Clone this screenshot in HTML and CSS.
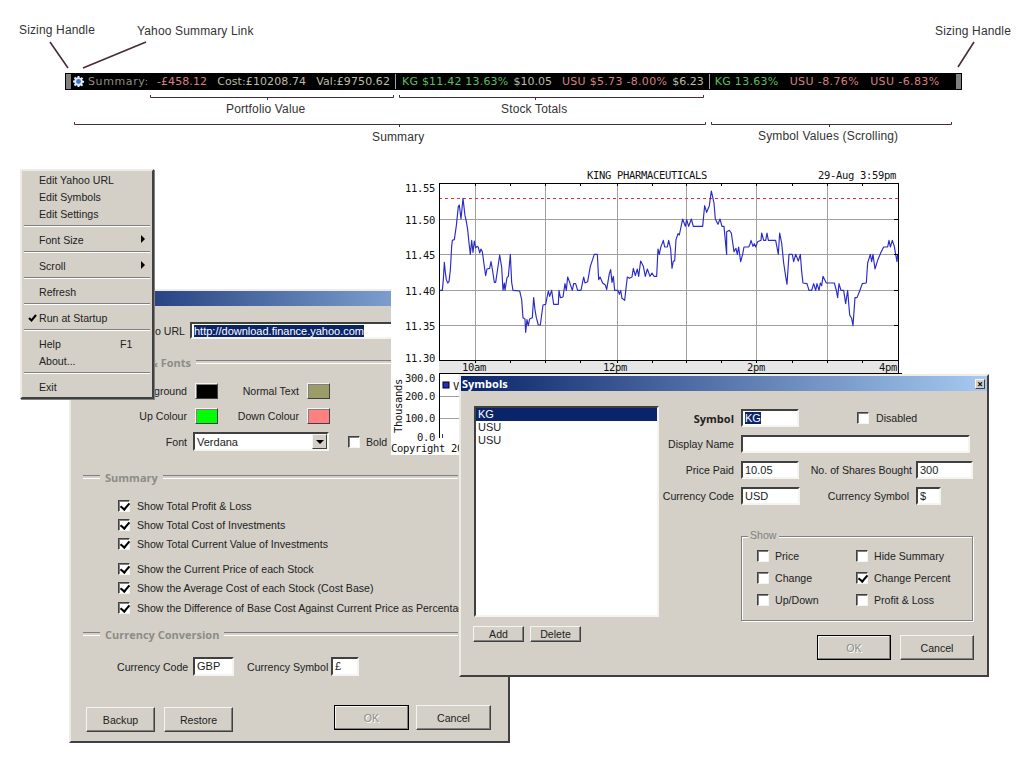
FILE: index.html
```html
<!DOCTYPE html>
<html lang="en">
<head>
    <meta charset="UTF-8">
    <title>Stock Ticker</title>
    <link rel="stylesheet" href="styles.css">
</head>
<body>
<div class="canvas">

    <!-- annotations -->
    <span class="note note-handle-l">Sizing Handle</span>
    <span class="note note-link">Yahoo Summary Link</span>
    <span class="note note-handle-r">Sizing Handle</span>
    <span class="note note-portfolio">Portfolio Value</span>
    <span class="note note-totals">Stock Totals</span>
    <span class="note note-summary">Summary</span>
    <span class="note note-symbols">Symbol Values (Scrolling)</span>

    <svg class="marks" width="1024" height="150" viewBox="0 0 1024 150">
        <g stroke="#4a2a3a" fill="none">
            <path stroke-width="1.6" d="M50 42L68 68M146 42L83 68M974 42L958 67"/>
            <path d="M150.500 95V97.500H393.500V95M267.500 97V100"/>
            <path d="M399.500 95V97.500H703.500V95M535.500 97V100"/>
            <path d="M74.500 122V124.500H705.500V122M399.500 124V127"/>
            <path d="M711.500 122V124.500H951.500V122M829.500 124V127"/>
        </g>
    </svg>

    <!-- ticker bar -->
    <div class="ticker">
        <span class="handle"></span>
        <svg class="gear" width="11" height="11" viewBox="0 0 11 11">
            <path fill="#dfeaf8" d="M4.500 0h2v1.500l1.300.5 1-1 1.400 1.400-1 1 .5 1.300H11v2H9.700l-.5 1.300 1 1-1.400 1.400-1-1-1.300.5V11h-2V9.700l-1.300-.5-1 1-1.400-1.400 1-1L1.300 6.500H0v-2h1.300l.5-1.300-1-1L2.200.8l1 1 1.300-.5z"/>
            <circle cx="5.500" cy="5.500" r="2.400" fill="#3c78c8"/>
        </svg>
        <span class="tick-text muted t-summary">Summary:</span>
        <span class="tick-text down t-loss">-£458.12</span>
        <span class="tick-text plain t-cost">Cost:£10208.74</span>
        <span class="tick-text plain t-val">Val:£9750.62</span>
        <span class="divider"></span>
        <span class="tick-text up t-kg">KG $11.42 13.63%</span>
        <span class="tick-text plain t-paid">$10.05</span>
        <span class="tick-text down t-usu">USU $5.73 -8.00%</span>
        <span class="tick-text plain t-paid2">$6.23</span>
        <span class="divider"></span>
        <span class="tick-text up t-kg2">KG 13.63%</span>
        <span class="tick-text down t-usu2">USU -8.76%</span>
        <span class="tick-text down t-usu3">USU -6.83%</span>
        <span class="handle handle-r"></span>
    </div>

    <!-- settings window -->
    <div class="window settings">
        <div class="titlebar"></div>
        <div class="row url-row">
            <span class="label url-label">Yahoo URL</span>
            <span class="input url-input"><span class="sel">http://download.finance.yahoo.com</span></span>
        </div>

        <div class="group-head head-fonts"><span>Colours &amp; Fonts</span></div>
        <div class="row swatch-row first-swatch">
            <span class="label lab-a">Background</span>
            <span class="swatch black"></span>
            <span class="label lab-b">Normal Text</span>
            <span class="swatch olive"></span>
        </div>
        <div class="row swatch-row">
            <span class="label lab-a">Up Colour</span>
            <span class="swatch green"></span>
            <span class="label lab-b">Down Colour</span>
            <span class="swatch pink"></span>
        </div>
        <div class="row font-row">
            <span class="label lab-a">Font</span>
            <span class="input select">Verdana<span class="drop"></span></span>
            <span class="check bold-check"></span>
            <span class="bold-label">Bold</span>
        </div>

        <div class="group-head head-summary"><span>Summary</span></div>
        <ul class="checks">
            <li><span class="check on"></span>Show Total Profit &amp; Loss</li>
            <li><span class="check on"></span>Show Total Cost of Investments</li>
            <li><span class="check on"></span>Show Total Current Value of Investments</li>
            <li class="gap"><span class="check on"></span>Show the Current Price of each Stock</li>
            <li><span class="check on"></span>Show the Average Cost of each Stock (Cost Base)</li>
            <li><span class="check on"></span>Show the Difference of Base Cost Against Current Price as Percentage</li>
        </ul>

        <div class="group-head head-currency"><span>Currency Conversion</span></div>
        <div class="row currency-row">
            <span class="cur-code">Currency Code</span>
            <span class="input code-input">GBP</span>
            <span class="cur-sym">Currency Symbol</span>
            <span class="input sym-input">£</span>
        </div>

        <div class="actions">
            <div class="actions-left">
                <button class="btn">Backup</button>
                <button class="btn">Restore</button>
            </div>
            <div class="actions-right">
                <button class="btn default">OK</button>
                <button class="btn">Cancel</button>
            </div>
        </div>
    </div>

    <!-- chart picture -->
    <svg class="chart" width="511" height="290" viewBox="0 0 511 290">
        <rect width="511" height="290" fill="#fff"/>
        <rect x="48" y="195" width="459" height="13" fill="#e6e6e6"/>
        <g stroke="#a0a0a0" fill="none">
            <path d="M48 54.500H507M48 89.500H507M48 125.500H507M48 160.500H507"/>
            <path d="M84.500 18V195M154.500 18V195M226.500 18V195M295.500 18V195M365.500 18V195M436.500 18V195"/>
            <path d="M48 231.500H120M48 253.500H120"/>
        </g>
        <path d="M48 33.500H507" stroke="#e0303c" stroke-dasharray="3 3"/>
        <g fill="none" stroke="#2a2ac8" stroke-width="1.150" stroke-linejoin="round">
            <polyline vector-effect="non-scaling-stroke" transform="translate(44 18) scale(.3333)" points="14,322 22,322 25,290 28,238 31,268 34,290 38,300 42,296 46,262 50,190 52,172 58,170 64,128 70,70 73,66 78,108 84,46 90,98 94,115 98,140 102,180 106,214 110,172 114,208 118,174 122,195 126,190 130,193 134,210 138,198 142,206 148,250 152,278 156,258 164,256 168,236 172,258 178,298 182,298 188,258 194,216 200,252 204,322 208,300 210,322 216,284 220,280 226,214 230,298 234,322 254,324 260,350 264,404 270,408 272,448 276,410 280,428 284,408 292,404 296,344 300,380 304,404 310,426 316,426 324,366 332,364 340,324 344,340 350,322 356,364 370,364 372,322 376,344 384,342 390,302 394,322 398,282 404,298 412,322 416,302 422,302 428,322 438,322 446,282 450,300 458,296 466,250 472,232 478,214"/>
            <polyline vector-effect="non-scaling-stroke" transform="translate(199 18) scale(.3333)" points="12,214 22,214 26,290 30,282 38,300 46,306 50,320 58,272 62,260 66,298 70,280 74,322 84,322 88,334 92,322 96,346 104,352 108,316 112,282 118,286 126,282 130,256 136,278 142,258 146,280 152,234 160,250 166,280 172,258 180,280 186,270 192,280 200,280 204,198 208,214 212,194 220,172 224,192 232,192 236,172 242,198 246,256 250,234 254,234 258,170 264,152 268,156 278,108 286,130 290,110 296,130 304,108 310,130 338,130 344,68 350,88 358,68 364,24 372,60 376,108 384,124 390,108 396,130 402,130 410,214 410,146 418,142 424,150 432,206 438,196 442,214 446,192 452,236 458,214 462,192 476,192 480,184"/>
            <polyline vector-effect="non-scaling-stroke" transform="translate(354 18) scale(.3333)" points="15,184 18,172 24,190 28,182 32,192 38,176 48,172 50,150 56,172 62,172 66,150 70,172 92,172 100,214 104,150 110,180 116,240 122,280 126,304 132,214 142,214 146,236 152,214 160,234 166,214 170,266 174,300 186,302 192,322 200,322 206,302 212,322 216,302 222,322 226,300 230,308 234,280 244,300 268,300 274,322 278,344 282,302 288,322 296,322 302,362 308,322 314,396 320,406 324,428 330,344 336,344 344,324 352,302 364,300 368,240 376,214 380,236 384,214 390,258 398,232 408,208 416,192 428,192 432,172 436,192 442,172 448,190 452,214 456,236 458,214"/>
        </g>
        <g stroke="#000" fill="none">
            <rect x="48.500" y="18.500" width="459" height="177"/>
            <path d="M48.500 208.500H520M48.500 208V273M507.500 195V208"/>
            <path d="M84.500 18V21M119.500 18V21M154.500 18V21M189.500 18V21M226.500 18V21M261.500 18V21M295.500 18V21M330.500 18V21M365.500 18V21M401.500 18V21M436.500 18V21M471.500 18V21"/>
            <path d="M84.500 195V198M119.500 195V198M154.500 195V198M189.500 195V198M226.500 195V198M261.500 195V198M295.500 195V198M330.500 195V198M365.500 195V198M401.500 195V198M436.500 195V198M471.500 195V198"/>
            <path d="M503 54.500H507M503 89.500H507M503 125.500H507M503 160.500H507"/>
        </g>
        <rect x="52" y="217" width="6" height="6" fill="#2a2ac8" stroke="#000"/>
        <path d="M51.500 269V273" stroke="#2a2ac8"/>
        <g class="chart-text">
            <text x="196" y="14">KING PHARMACEUTICALS</text>
            <text x="427" y="14">29-Aug 3:59pm</text>
            <text x="14" y="27">11.55</text>
            <text x="14" y="59">11.50</text>
            <text x="14" y="94">11.45</text>
            <text x="14" y="130">11.40</text>
            <text x="14" y="165">11.35</text>
            <text x="14" y="197">11.30</text>
            <text x="71" y="206">10am</text>
            <text x="212" y="206">12pm</text>
            <text x="356" y="206">2pm</text>
            <text x="488" y="206">4pm</text>
            <text x="14" y="217">300.0</text>
            <text x="14" y="235">200.0</text>
            <text x="14" y="257">100.0</text>
            <text x="26" y="276">0.0</text>
            <text x="62" y="225">V</text>
            <text x="0" y="287">Copyright 2003</text>
            <text transform="translate(11 268) rotate(-90)">Thousands</text>
        </g>
    </svg>

    <!-- symbols window -->
    <div class="window symbols">
        <div class="titlebar title-symbols">
            <span>Symbols</span>
            <span class="close">×</span>
        </div>
        <div class="sym-body">
            <div class="sym-left">
                <ul class="listbox">
                    <li class="active">KG</li>
                    <li>USU</li>
                    <li>USU</li>
                </ul>
                <div class="list-btns">
                    <button class="btn small">Add</button>
                    <button class="btn small">Delete</button>
                </div>
            </div>
            <div class="sym-right">
                <div class="form-row">
                    <span class="form-label strong">Symbol</span>
                    <span class="input w-58"><span class="sel">KG</span></span>
                    <span class="check disabled-check"></span>
                    <span>Disabled</span>
                </div>
                <div class="form-row">
                    <span class="form-label">Display Name</span>
                    <span class="input w-name"></span>
                </div>
                <div class="form-row">
                    <span class="form-label">Price Paid</span>
                    <span class="input w-58">10.05</span>
                    <span class="form-label2">No. of Shares Bought</span>
                    <span class="input w-shares">300</span>
                </div>
                <div class="form-row">
                    <span class="form-label">Currency Code</span>
                    <span class="input w-59">USD</span>
                    <span class="form-label3">Currency Symbol</span>
                    <span class="input w-cur">$</span>
                </div>
                <div class="show-group">
                    <span class="show-legend">Show</span>
                    <div class="show-grid">
                        <div class="show-item"><span class="check"></span>Price</div>
                        <div class="show-item"><span class="check"></span>Hide Summary</div>
                        <div class="show-item"><span class="check"></span>Change</div>
                        <div class="show-item"><span class="check on"></span>Change Percent</div>
                        <div class="show-item"><span class="check"></span>Up/Down</div>
                        <div class="show-item"><span class="check"></span>Profit &amp; Loss</div>
                    </div>
                </div>
                <div class="sym-actions">
                    <button class="btn default">OK</button>
                    <button class="btn">Cancel</button>
                </div>
            </div>
        </div>
    </div>

    <!-- popup menu -->
    <div class="menu">
        <div class="item">Edit Yahoo URL</div>
        <div class="item">Edit Symbols</div>
        <div class="item">Edit Settings</div>
        <div class="sep"></div>
        <div class="item">Font Size<span class="arrow"></span></div>
        <div class="sep"></div>
        <div class="item">Scroll<span class="arrow"></span></div>
        <div class="sep"></div>
        <div class="item">Refresh</div>
        <div class="sep"></div>
        <div class="item">
            <svg class="tick" width="9" height="8" viewBox="0 0 9 8"><path d="M1 4l2.500 2.500L8 1" fill="none" stroke="#000" stroke-width="2"/></svg>
            Run at Startup
        </div>
        <div class="sep"></div>
        <div class="item"><span class="item-name">Help</span><span>F1</span></div>
        <div class="item">About...</div>
        <div class="sep"></div>
        <div class="item">Exit</div>
    </div>

</div>
</body>
</html>
```

FILE: styles.css
```css
* {
    box-sizing: border-box;
}

body {
    margin: 0;
    background-color: #fff;
    font-family: "Liberation Sans", sans-serif;
    font-size: 10.600px;
    color: #222;
}

.canvas {
    position: relative;
    width: 1024px;
    height: 768px;
    overflow: hidden;
}

/* annotations */
.note {
    position: absolute;
    font-family: "Liberation Sans", sans-serif;
    font-size: 12px;
    letter-spacing: 0.15px;
    line-height: 14px;
    color: #333;
    white-space: nowrap;
}

.note-handle-l { left: 19px; top: 23px; }
.note-link { left: 137px; top: 24px; }
.note-handle-r { left: 935px; top: 24px; }
.note-portfolio { left: 226px; top: 102px; }
.note-totals { left: 501px; top: 102px; }
.note-summary { left: 372px; top: 130px; }
.note-symbols { left: 758px; top: 129px; }

.marks {
    position: absolute;
    left: 0;
    top: 0;
}

/* ticker */
.ticker {
    position: absolute;
    left: 65px;
    top: 73px;
    width: 897px;
    height: 17px;
    display: flex;
    align-items: center;
    background-color: #000;
    font-family: "DejaVu Sans", sans-serif;
    font-size: 11px;
    letter-spacing: 0.1px;
    white-space: nowrap;
}

.handle {
    flex: none;
    width: 5px;
    height: 15px;
    margin-left: 1px;
    background-color: #808080;
}

.handle-r {
    margin-left: auto;
    margin-right: 1px;
}

.gear {
    flex: none;
    margin-left: 2px;
}

.divider {
    flex: none;
    width: 1px;
    height: 15px;
    background-color: #a0a0a0;
}

.tick-text { line-height: 17px; }
.muted { color: #8f8f80; }
.plain { color: #bdbdaa; }
.up { color: #58c058; }
.down { color: #d88080; }

.t-summary { margin-left: 4px; letter-spacing: 0.6px; }
.t-loss { margin-left: 8px; }
.t-cost { margin-left: 10px; }
.t-val { margin-left: 10px; }
.t-val + .divider { margin-left: 5px; }
.t-kg { margin-left: 6px; letter-spacing: 0.2px; }
.t-paid { margin-left: 5px; letter-spacing: 0; }
.t-usu { margin-left: 10px; letter-spacing: 0.3px; }
.t-paid2 { margin-left: 5px; letter-spacing: 0; }
.t-paid2 + .divider { margin-left: 5px; }
.t-kg2 { margin-left: 5px; letter-spacing: 0.3px; }
.t-usu2 { margin-left: 11px; letter-spacing: 0.4px; }
.t-usu3 { margin-left: 11px; letter-spacing: 0.4px; }

/* windows */
.window {
    position: absolute;
    background-color: #d4d0c8;
    border: 2px solid;
    border-color: #eeece6 #404040 #404040 #eeece6;
    overflow: hidden;
}

.titlebar {
    height: 15px;
    background: linear-gradient(to right, #0a246a, #a6caf0);
}

.settings {
    left: 69px;
    top: 289px;
    width: 441px;
    height: 454px;
}

.row {
    display: flex;
    align-items: center;
    white-space: nowrap;
}

.label {
    text-align: right;
}

.input {
    display: block;
    height: 18px;
    padding: 1px 2px;
    background-color: #fff;
    border: 2px solid;
    border-color: #404040 #f4f4f0 #f4f4f0 #404040;
    line-height: 12px;
    font-size: 11px;
    white-space: nowrap;
    overflow: hidden;
}

.sel {
    background-color: #0a246a;
    color: #fff;
}

.url-row {
    height: 17px;
    margin-top: 16px;
}

.url-label {
    width: 114px;
    margin-right: 5px;
}

.url-input {
    width: 300px;
    height: 17px;
}

.group-head {
    display: flex;
    align-items: center;
    height: 14px;
    margin-left: 12px;
    margin-right: 50px;
    font-family: "Open Sans", sans-serif;
    font-size: 11px;
    font-weight: 700;
    color: #8c8c86;
}

.group-head::before,
.group-head::after {
    content: "";
    height: 2px;
    border-top: 1px solid #808080;
    border-bottom: 1px solid #fff;
}

.group-head::before {
    width: 17px;
    margin-right: 5px;
}

.group-head::after {
    flex: 1;
    margin-left: 5px;
}

.head-fonts { margin-top: 16px; }

.swatch-row {
    height: 17px;
    margin-top: 8px;
}

.first-swatch { margin-top: 13px; }

.lab-a {
    width: 116px;
    margin-right: 8px;
}

.lab-b {
    width: 81px;
    margin-right: 8px;
}

.swatch {
    width: 23px;
    height: 16px;
    border: 1px solid;
    border-color: #f4f4f0 #404040 #404040 #f4f4f0;
    box-shadow: inset 1px 1px 0 #808080;
}

.black { background-color: #000; }
.olive { background-color: #9c9c68; }
.green { background-color: #00ff00; }
.pink { background-color: #ff8080; }

.font-row {
    height: 19px;
    margin-top: 8px;
}

.font-row .lab-a { margin-right: 6px; }

.select {
    position: relative;
    width: 136px;
    height: 19px;
    line-height: 14px;
}

.drop {
    position: absolute;
    right: 0;
    top: 0;
    width: 15px;
    height: 15px;
    background-color: #d4d0c8;
    border: 1px solid;
    border-color: #f4f4f0 #404040 #404040 #f4f4f0;
}

.drop::after {
    content: "";
    position: absolute;
    left: 3px;
    top: 5px;
    border-left: 4px solid transparent;
    border-right: 4px solid transparent;
    border-top: 4px solid #000;
}

.check {
    position: relative;
    flex: none;
    display: inline-block;
    width: 12px;
    height: 12px;
    background-color: #fff;
    border: 1px solid;
    border-color: #404040 #f4f4f0 #f4f4f0 #404040;
    box-shadow: inset 1px 1px 0 #808080;
}

.check.on::after {
    content: "";
    position: absolute;
    left: 3px;
    top: 0;
    width: 4px;
    height: 7px;
    border: solid #000;
    border-width: 0 2px 2px 0;
    transform: rotate(40deg);
}

.bold-check { margin-left: 19px; }
.bold-label { margin-left: 6px; }

.head-summary { margin-top: 19px; }

.checks {
    list-style: none;
    margin: 12px 0 0;
    padding: 0 0 0 47px;
    white-space: nowrap;
}

.checks li {
    display: flex;
    align-items: center;
    height: 19px;
}

.checks li.gap { margin-top: 6px; }
.checks li:last-child { margin-top: 1px; }

.checks .check { margin-right: 7px; }

.head-currency { margin-top: 10px; }

.currency-row {
    height: 19px;
    margin-top: 16px;
    padding-left: 46px;
}

.cur-code { width: 76px; }

.code-input {
    width: 41px;
    height: 19px;
}

.cur-sym {
    width: 80px;
    margin-left: 13px;
}

.sym-input {
    width: 28px;
    height: 19px;
    margin-left: 4px;
}

.actions {
    display: flex;
    justify-content: space-between;
    align-items: flex-start;
    margin-top: 29px;
    padding: 0 17px 0 15px;
}

.actions-left {
    display: flex;
    gap: 9px;
    padding-top: 2px;
}

.actions-right {
    display: flex;
    gap: 7px;
}

.btn {
    width: 69px;
    height: 25px;
    padding: 0;
    font: inherit;
    color: #222;
    background-color: #d4d0c8;
    border: 1px solid;
    border-color: #f4f4f0 #404040 #404040 #f4f4f0;
    box-shadow: inset -1px -1px 0 #808080;
}

.actions-right .btn {
    width: 75px;
}

.btn.default {
    border: 1px solid #000;
    box-shadow: inset -1px -1px 0 #808080, inset 1px 1px 0 #f4f4f0;
    color: #8c8c86;
    text-shadow: 1px 1px 0 #fff;
}

/* chart */
.chart {
    position: absolute;
    left: 391px;
    top: 165px;
}

.chart-text text {
    font-family: "DejaVu Sans Mono", monospace;
    font-size: 10.500px;
    letter-spacing: -0.320px;
    fill: #111;
}

/* symbols */
.symbols {
    left: 459px;
    top: 374px;
    width: 530px;
    height: 303px;
}

.title-symbols {
    display: flex;
    align-items: center;
    justify-content: space-between;
    padding: 0 2px 0 1px;
    font-family: "Open Sans", sans-serif;
    font-size: 11px;
    font-weight: 700;
    color: #fff;
}

.close {
    width: 10px;
    height: 10px;
    background-color: #d4d0c8;
    border: 1px solid;
    border-color: #f4f4f0 #404040 #404040 #f4f4f0;
    color: #000;
    font-size: 10px;
    line-height: 8px;
    text-align: center;
}

.sym-body {
    display: flex;
    padding-top: 15px;
}

.sym-left {
    width: 198px;
    padding-left: 13px;
}

.listbox {
    list-style: none;
    width: 185px;
    height: 211px;
    margin: 0;
    padding: 0;
    background-color: #fff;
    border: 2px solid;
    border-color: #404040 #f4f4f0 #f4f4f0 #404040;
    font-size: 11px;
    line-height: 13px;
}

.listbox .active {
    background-color: #0a246a;
    color: #fff;
}

.listbox li { padding-left: 2px; }

.list-btns {
    display: flex;
    gap: 6px;
    margin: 9px 0 0 -1px;
}

.btn.small {
    width: 51px;
    height: 16px;
    line-height: 12px;
}

.sym-right {
    padding-top: 3px;
    white-space: nowrap;
}

.form-row {
    display: flex;
    align-items: center;
    height: 18px;
    margin-bottom: 8px;
}

.form-label {
    width: 75px;
    margin-right: 7px;
    text-align: right;
}

.strong {
    font-family: "Open Sans", sans-serif;
    font-size: 11px;
    font-weight: 700;
}

.w-58 { width: 58px; }
.w-59 { width: 59px; }
.w-name { width: 229px; }
.w-shares { width: 57px; }
.w-cur { width: 25px; }

.disabled-check { margin: 0 7px 0 58px; }

.form-label2 {
    width: 113px;
    margin-right: 4px;
    text-align: right;
}

.form-label3 {
    width: 109px;
    margin-right: 7px;
    text-align: right;
}

.show-group {
    position: relative;
    width: 232px;
    height: 85px;
    margin: 31px 0 0 82px;
    border: 1px solid #808080;
    box-shadow: 1px 1px 0 #fff, inset 1px 1px 0 #fff;
}

.show-legend {
    position: absolute;
    left: 6px;
    top: -8px;
    padding: 0 2px;
    background-color: #d4d0c8;
    color: #808080;
}

.show-grid {
    display: grid;
    grid-template-columns: 99px 1fr;
    grid-auto-rows: 22px;
    padding: 8px 0 0 15px;
}

.show-item {
    display: flex;
    align-items: center;
}

.show-item .check { margin-right: 6px; }

.sym-actions {
    display: flex;
    gap: 9px;
    margin: 14px 0 0 158px;
}

.sym-actions .btn { width: 74px; }

/* popup menu */
.menu {
    position: absolute;
    left: 20px;
    top: 169px;
    width: 134px;
    height: 230px;
    padding: 0;
    background-color: #d4d0c8;
    border: 2px solid;
    border-color: #eeece6 #404040 #404040 #eeece6;
    box-shadow: 1px 1px 0 #808080;
}

.item {
    position: relative;
    display: flex;
    align-items: center;
    height: 17px;
    padding-left: 17px;
}

.item-name { width: 81px; }

.arrow {
    position: absolute;
    right: 7px;
    top: 4px;
    border-top: 4px solid transparent;
    border-bottom: 4px solid transparent;
    border-left: 4px solid #000;
}

.tick {
    position: absolute;
    left: 6px;
    top: 5px;
}

.sep {
    height: 2px;
    margin: 3px 2px 4px;
    border-top: 1px solid #808080;
    border-bottom: 1px solid #fff;
}
```
